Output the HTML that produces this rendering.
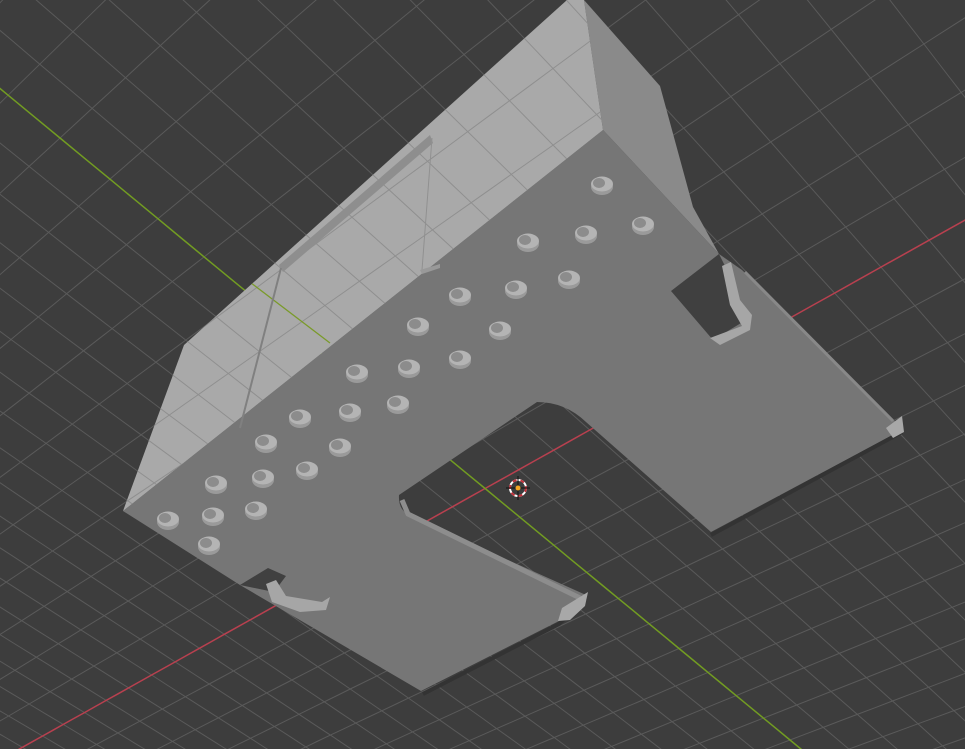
<!DOCTYPE html>
<html><head><meta charset="utf-8">
<style>
html,body{margin:0;padding:0;background:#3d3d3d;overflow:hidden;width:965px;height:749px}
svg{display:block}
</style></head>
<body>
<svg id="s" width="965" height="749" viewBox="0 0 965 749" xmlns="http://www.w3.org/2000/svg">
<defs>
<clipPath id="lf"><polygon points="184,345 567,0 584,0 603,130 123,511"/></clipPath>
<clipPath id="vp"><rect width="965" height="749"/></clipPath>
</defs>
<g clip-path="url(#vp)">
<rect width="965" height="749" fill="#3d3d3d"/>
<g id="grid" stroke="#5a5a5a" stroke-width="1" fill="none"></g>
<g id="axes" fill="none" stroke-width="1.5"></g>

<polygon points="584,0 660,86 693,207 719,254 603,130" fill="#8a8a8a"/>
<path d="M123,511 L603,130 L719,254 L742,270 L893,419 L902,430 L711,532 L586,422 Q565,402 537,402 L399,495 Q398,510 410,516 L586,595 L559,621 L421,691 L240,585 Z" fill="#767676"/>
<polyline points="902,432 711,535" stroke="#333" stroke-width="4" fill="none"/>
<polyline points="586,598 559,624 423,694" stroke="#333" stroke-width="4" fill="none"/>
<polyline points="402,500 408,514 580,598" stroke="#8d8d8d" stroke-width="5" fill="none"/>
<polyline points="745,272 893,421" stroke="#888" stroke-width="3" fill="none"/>
<polygon points="562,608 588,592 585,606 570,620 558,621" fill="#a8a8a8"/>
<polygon points="886,428 902,416 904,432 893,438" fill="#a8a8a8"/>
<polygon points="671,291 719,254 726,268 734,305 746,320 713,340" fill="#404040"/>
<polygon points="722,266 731,262 740,300 752,315 750,330 720,345 710,338 742,326 730,305" fill="#a6a6a6"/>
<polygon points="240,585 268,568 286,576 274,592" fill="#404040"/>
<polygon points="266,584 276,580 286,596 322,602 330,597 326,610 300,612 272,602" fill="#a6a6a6"/>
<polygon points="184,345 567,0 584,0 603,130 123,511" fill="#a9a9a9"/>
<g id="grid2" stroke="#8f8f8f" stroke-width="1" fill="none" clip-path="url(#lf)"></g>
<line x1="0" y1="92" x2="330" y2="343" stroke="#7a9a2a" stroke-width="1.3" clip-path="url(#lf)"/>
<polygon points="279,265 430,135 433,143 283,272" fill="#8e8e8e"/>
<line x1="281" y1="268" x2="240" y2="428" stroke="#808080" stroke-width="2"/>
<line x1="432" y1="138" x2="422" y2="270" stroke="#909090" stroke-width="1"/>
<polygon points="420,270 440,264 440,268 422,274" fill="#999"/>
<g id="holes"></g>
<circle cx="518" cy="488" r="8" fill="none" stroke="#fff" stroke-width="2"/>
<circle cx="518" cy="488" r="8" fill="none" stroke="#c0303a" stroke-width="2" stroke-dasharray="4 4"/>
<line x1="518" y1="476" x2="518" y2="500" stroke="#111" stroke-width="1"/>
<line x1="506" y1="488" x2="530" y2="488" stroke="#111" stroke-width="1"/>
<circle cx="518" cy="488" r="2.5" fill="#f5a623"/>
</g>
</svg>
<script>
(function(){
var NS="http://www.w3.org/2000/svg";
function solve(A,b){var n=b.length;for(var i=0;i<n;i++){var m=i;for(var k=i+1;k<n;k++)if(Math.abs(A[k][i])>Math.abs(A[m][i]))m=k;var t=A[i];A[i]=A[m];A[m]=t;t=b[i];b[i]=b[m];b[m]=t;for(var k=i+1;k<n;k++){var f=A[k][i]/A[i][i];for(var j=i;j<n;j++)A[k][j]-=f*A[i][j];b[k]-=f*b[i];}}var x=new Array(n);for(var i=n-1;i>=0;i--){var s=b[i];for(var j=i+1;j<n;j++)s-=A[i][j]*x[j];x[i]=s/A[i][i];}return x;}
var src=[[8,0],[-8,0],[0,10],[0,-10]],dst=[[790,318],[250,620],[60,138],[790,740]];
var A=[],b=[];
for(var i=0;i<4;i++){var u=src[i][0],v=src[i][1],X=dst[i][0],Y=dst[i][1];
A.push([u,v,1,0,0,0,-u*X,-v*X]);b.push(X);A.push([0,0,0,u,v,1,-u*Y,-v*Y]);b.push(Y);}
var h=solve(A,b);
function P(u,v){var w=h[6]*u+h[7]*v+1;if(w<=0.02)return null;return [(h[0]*u+h[1]*v+h[2])/w,(h[3]*u+h[4]*v+h[5])/w];}
function line(g,pts,stroke){var p=document.createElementNS(NS,"polyline");p.setAttribute("points",pts.map(function(q){return q[0].toFixed(1)+","+q[1].toFixed(1)}).join(" "));if(stroke)p.setAttribute("stroke",stroke);g.appendChild(p);}
function ok(q){return q&&q[0]>-200&&q[0]<1200&&q[1]>-200&&q[1]<1000;}
function gen(g,fu){
for(var k=-80;k<=80;k++){
 if(k===0)continue;
 var pts=[];for(var t=-200;t<=200;t+=0.5){var q=fu?P(k,t):P(t,k);if(ok(q))pts.push(q);}
 if(pts.length>1)line(g,pts);
}}
var g=document.getElementById("grid"),g2=document.getElementById("grid2");
gen(g,true);gen(g,false);gen(g2,true);gen(g2,false);
var ax=document.getElementById("axes");
function axis(fu,col){var pts=[];for(var t=-200;t<=200;t+=0.5){var q=fu?P(0,t):P(t,0);if(ok(q))pts.push(q);}line(ax,pts,col);}
axis(false,"#b8404f");axis(true,"#729c22");
var holes=[[602,185],[643,225],[586,234],[528,242],[516,289],[569,279],[460,296],[500,330],[418,326],[460,359],[409,368],[357,373],[398,404],[350,412],[300,418],[340,447],[266,443],[307,470],[263,478],[216,484],[256,510],[213,516],[168,520],[209,545]];
var hg=document.getElementById("holes");
holes.forEach(function(c){
 var e=document.createElementNS(NS,"ellipse");e.setAttribute("cx",c[0]);e.setAttribute("cy",c[1]+2);e.setAttribute("rx",11);e.setAttribute("ry",8);e.setAttribute("fill","#9a9a9a");hg.appendChild(e);
 e=document.createElementNS(NS,"ellipse");e.setAttribute("cx",c[0]);e.setAttribute("cy",c[1]-1);e.setAttribute("rx",11);e.setAttribute("ry",7.5);e.setAttribute("fill","#b4b4b4");hg.appendChild(e);
 e=document.createElementNS(NS,"ellipse");e.setAttribute("cx",c[0]-3);e.setAttribute("cy",c[1]-2);e.setAttribute("rx",6);e.setAttribute("ry",5);e.setAttribute("fill","#8c8c8c");hg.appendChild(e);
});
})();
</script>
</body></html>
